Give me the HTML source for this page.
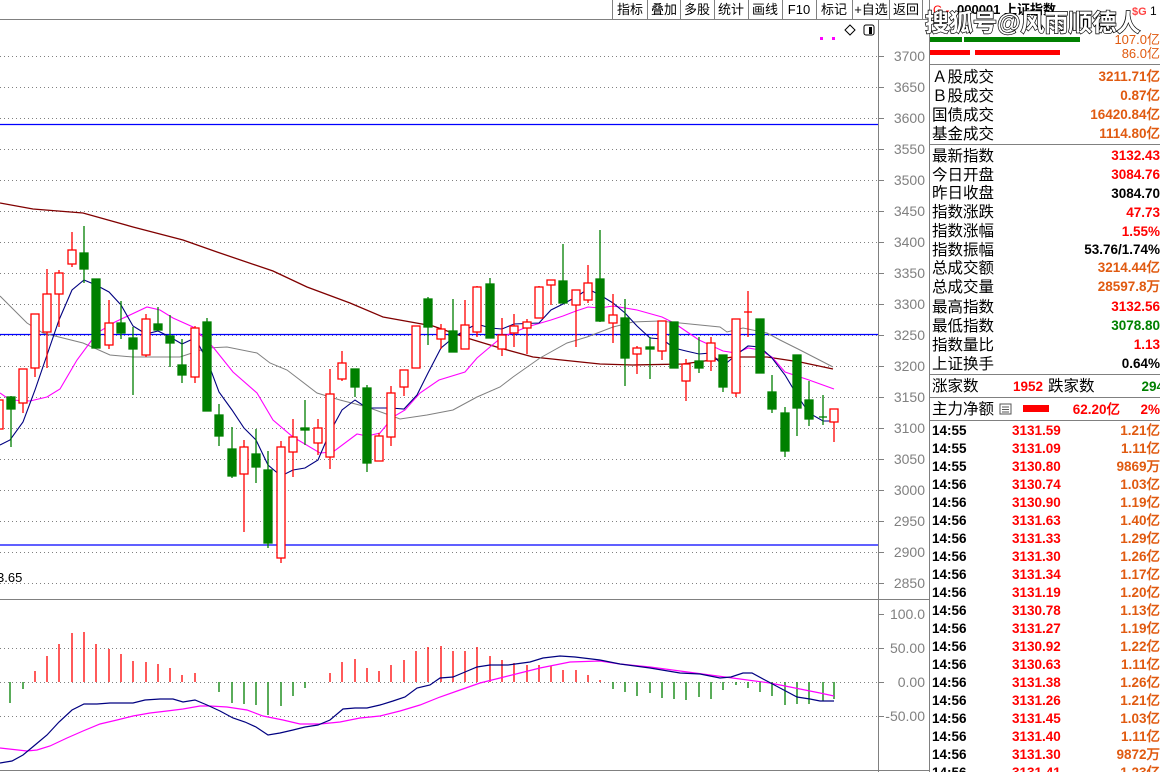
<!DOCTYPE html>
<html><head><meta charset="utf-8">
<style>
html,body{margin:0;padding:0;background:#fff;width:1160px;height:772px;overflow:hidden;font-family:"Liberation Sans","Noto Sans CJK SC",sans-serif;}
svg{display:block}
.ax{font:14px "Liberation Sans",sans-serif;fill:#808080;text-anchor:end}
.cj{font:15.5px "Liberation Sans","Noto Sans CJK SC",sans-serif;fill:#000}
.nb{font:bold 13.5px "Liberation Sans",sans-serif;text-anchor:end}
.tb{font:13px "Liberation Sans","Noto Sans CJK SC",sans-serif;fill:#000;text-anchor:middle}
</style></head><body>
<svg width="1160" height="772" viewBox="0 0 1160 772" xmlns="http://www.w3.org/2000/svg">
<!-- toolbar -->
<line x1="0" y1="19.5" x2="929" y2="19.5" stroke="#808080"/>
<g stroke="#808080">
<line x1="612.5" y1="0" x2="612.5" y2="19"/><line x1="647.5" y1="0" x2="647.5" y2="19"/><line x1="680.5" y1="0" x2="680.5" y2="19"/><line x1="714.5" y1="0" x2="714.5" y2="19"/><line x1="748.5" y1="0" x2="748.5" y2="19"/><line x1="782.5" y1="0" x2="782.5" y2="19"/><line x1="816.5" y1="0" x2="816.5" y2="19"/><line x1="852.5" y1="0" x2="852.5" y2="19"/><line x1="889.5" y1="0" x2="889.5" y2="19"/><line x1="922.5" y1="0" x2="922.5" y2="19"/>
</g>
<g class="tb"><text x="630" y="14">指标</text><text x="664" y="14">叠加</text><text x="697" y="14">多股</text><text x="731" y="14">统计</text><text x="765" y="14">画线</text><text x="799" y="14">F10</text><text x="834" y="14">标记</text><text x="871" y="14">+自选</text><text x="906" y="14">返回</text></g>

<!-- axes -->
<line x1="878.5" y1="19" x2="878.5" y2="772" stroke="#808080"/>
<line x1="929.5" y1="0" x2="929.5" y2="772" stroke="#808080"/>
<line x1="0" y1="599.5" x2="929" y2="599.5" stroke="#808080"/>
<line x1="0" y1="770.5" x2="929" y2="770.5" stroke="#808080"/>

<!-- icons -->
<path d="M850 25 L855 30 L850 35 L845 30 Z" fill="none" stroke="#000"/>
<rect x="864" y="25" width="10" height="10" rx="2" fill="none" stroke="#000"/><rect x="869" y="27" width="3" height="7" fill="#000"/>
<rect x="820" y="37" width="3" height="3" fill="#f0f"/><rect x="832" y="37" width="3" height="3" fill="#f0f"/>

<!-- grid -->
<g stroke="#808080" stroke-dasharray="1 3">
<line x1="0" y1="56.5" x2="878" y2="56.5"/><line x1="0" y1="87.5" x2="878" y2="87.5"/><line x1="0" y1="118.5" x2="878" y2="118.5"/><line x1="0" y1="149.5" x2="878" y2="149.5"/><line x1="0" y1="180.5" x2="878" y2="180.5"/><line x1="0" y1="211.5" x2="878" y2="211.5"/><line x1="0" y1="242.5" x2="878" y2="242.5"/><line x1="0" y1="273.5" x2="878" y2="273.5"/><line x1="0" y1="304.5" x2="878" y2="304.5"/><line x1="0" y1="335.5" x2="878" y2="335.5"/><line x1="0" y1="366.5" x2="878" y2="366.5"/><line x1="0" y1="397.5" x2="878" y2="397.5"/><line x1="0" y1="428.5" x2="878" y2="428.5"/><line x1="0" y1="459.5" x2="878" y2="459.5"/><line x1="0" y1="490.5" x2="878" y2="490.5"/><line x1="0" y1="521.5" x2="878" y2="521.5"/><line x1="0" y1="552.5" x2="878" y2="552.5"/><line x1="0" y1="583.5" x2="878" y2="583.5"/>
<line x1="0" y1="648.5" x2="878" y2="648.5"/><line x1="0" y1="682.5" x2="878" y2="682.5"/><line x1="0" y1="716.5" x2="878" y2="716.5"/>
</g>
<g stroke="#808080">
<line x1="878" y1="56.5" x2="884" y2="56.5"/><line x1="878" y1="87.5" x2="884" y2="87.5"/><line x1="878" y1="118.5" x2="884" y2="118.5"/><line x1="878" y1="149.5" x2="884" y2="149.5"/><line x1="878" y1="180.5" x2="884" y2="180.5"/><line x1="878" y1="211.5" x2="884" y2="211.5"/><line x1="878" y1="242.5" x2="884" y2="242.5"/><line x1="878" y1="273.5" x2="884" y2="273.5"/><line x1="878" y1="304.5" x2="884" y2="304.5"/><line x1="878" y1="335.5" x2="884" y2="335.5"/><line x1="878" y1="366.5" x2="884" y2="366.5"/><line x1="878" y1="397.5" x2="884" y2="397.5"/><line x1="878" y1="428.5" x2="884" y2="428.5"/><line x1="878" y1="459.5" x2="884" y2="459.5"/><line x1="878" y1="490.5" x2="884" y2="490.5"/><line x1="878" y1="521.5" x2="884" y2="521.5"/><line x1="878" y1="552.5" x2="884" y2="552.5"/><line x1="878" y1="583.5" x2="884" y2="583.5"/>
<line x1="878" y1="614.5" x2="884" y2="614.5"/><line x1="878" y1="648.5" x2="884" y2="648.5"/><line x1="878" y1="682.5" x2="884" y2="682.5"/><line x1="878" y1="716.5" x2="884" y2="716.5"/>
</g>
<g class="ax">
<text x="925" y="61">3700</text><text x="925" y="92">3650</text><text x="925" y="123">3600</text><text x="925" y="154">3550</text><text x="925" y="185">3500</text><text x="925" y="216">3450</text><text x="925" y="247">3400</text><text x="925" y="278">3350</text><text x="925" y="309">3300</text><text x="925" y="340">3250</text><text x="925" y="371">3200</text><text x="925" y="402">3150</text><text x="925" y="433">3100</text><text x="925" y="464">3050</text><text x="925" y="495">3000</text><text x="925" y="526">2950</text><text x="925" y="557">2900</text><text x="925" y="588">2850</text>
<text x="925" y="619">100.0</text><text x="925" y="653">50.00</text><text x="925" y="687">0.00</text><text x="925" y="721">-50.00</text>
</g>
<text x="-3" y="582" style="font:13px 'Liberation Sans',sans-serif;fill:#000">3.65</text>

<!-- blue lines -->
<g stroke="#0000ff" stroke-width="1.3">
<line x1="0" y1="124.5" x2="878" y2="124.5"/><line x1="0" y1="334.5" x2="878" y2="334.5"/><line x1="0" y1="545" x2="878" y2="545"/>
</g>

<!-- MAs -->
<polyline fill="none" stroke="#800000" stroke-width="1.3" points="0,203 33,209 83,213 133,227 183,240 217,252 273,271 307,287 350,303 383,317 433,326 467,338 500,348 533,357 600,364 633,365 683,364 733,357 767,357 800,362 833,369"/>
<polyline fill="none" stroke="#808080" stroke-width="1" points="0,296 27,323 43,333 83,343 110,355 133,357 180,357 207,348 227,347 257,353 270,363 287,370 317,393 340,400 367,407 400,419 427,415 453,410 477,397 500,387 513,377 540,358 567,343 587,337 613,327 633,322 660,321 680,323 720,327 727,332 743,328 767,333 780,340 800,350 833,367"/>
<polyline fill="none" stroke="#ff00ff" stroke-width="1.1" points="0,393 10,400 30,401 47,397 60,389 77,360 97,333 115,322 147,307 160,310 173,318 193,327 213,347 233,372 257,393 273,420 293,437 320,453 333,452 357,434 367,436 380,433 393,417 405,410 420,393 439,380 465,372 477,358 490,347 502,337 527,327 551,320 563,316 576,311 588,307 600,308 613,306 637,310 662,317 674,323 699,340 723,351 736,353 748,348 760,350 772,357 785,372 809,380 834,389"/>
<polyline fill="none" stroke="#000080" stroke-width="1.1" points="0,445 10,440 23,422 35,390 47,355 59,320 72,290 84,280 96,285 109,292 121,305 133,326 146,334 158,331 170,337 182,344 195,338 207,360 219,392 232,410 244,428 256,440 268,465 281,476 293,470 305,468 318,460 330,432 342,410 355,400 367,408 379,408 391,408 404,409 417,395 428,373 441,348 453,338 465,330 477,324 490,328 502,329 514,324 539,323 551,310 563,304 576,297 588,289 600,295 613,303 625,313 637,326 650,338 662,339 674,348 686,351 699,354 711,353 723,366 736,355 748,346 760,347 772,358 785,375 797,395 809,413 823,421 834,421"/>

<!-- candles -->
<g id="c">
<g stroke="#ff0000" fill="#fff" stroke-width="1.3">
<line x1="-1" y1="400" x2="-1" y2="429"/><rect x="-5" y="400" width="8" height="29"/>
<line x1="23" y1="369" x2="23" y2="413"/><rect x="19" y="369" width="8" height="34"/>
<line x1="35" y1="314" x2="35" y2="377"/><rect x="31" y="314" width="8" height="54"/>
<line x1="47" y1="269" x2="47" y2="368"/><rect x="43" y="294" width="8" height="38"/>
<line x1="59" y1="270" x2="59" y2="327"/><rect x="55" y="273" width="8" height="21"/>
<line x1="72" y1="232" x2="72" y2="267"/><rect x="68" y="250" width="8" height="14"/>
<line x1="109" y1="300" x2="109" y2="349"/><rect x="105" y="323" width="8" height="22"/>
<line x1="146" y1="314" x2="146" y2="357"/><rect x="142" y="319" width="8" height="36"/>
<line x1="195" y1="326" x2="195" y2="383"/><rect x="191" y="328" width="8" height="49"/>
<line x1="244" y1="440" x2="244" y2="532"/><rect x="240" y="447" width="8" height="27"/>
<line x1="281" y1="441" x2="281" y2="563"/><rect x="277" y="447" width="8" height="111"/>
<line x1="293" y1="419" x2="293" y2="477"/><rect x="289" y="437" width="8" height="15"/>
<line x1="318" y1="419" x2="318" y2="455"/><rect x="314" y="428" width="8" height="15"/>
<line x1="330" y1="369" x2="330" y2="469"/><rect x="326" y="394" width="8" height="63"/>
<line x1="342" y1="351" x2="342" y2="381"/><rect x="338" y="363" width="8" height="16"/>
<line x1="379" y1="433" x2="379" y2="461"/><rect x="375" y="436" width="8" height="25"/>
<line x1="391" y1="386" x2="391" y2="446"/><rect x="387" y="393" width="8" height="44"/>
<line x1="404" y1="370" x2="404" y2="396"/><rect x="400" y="370" width="8" height="17"/>
<line x1="416" y1="326" x2="416" y2="368"/><rect x="412" y="326" width="8" height="42"/>
<line x1="441" y1="324" x2="441" y2="349"/><rect x="437" y="329" width="8" height="10"/>
<line x1="465" y1="300" x2="465" y2="349"/><rect x="461" y="325" width="8" height="24"/>
<line x1="477" y1="286" x2="477" y2="337"/><rect x="473" y="287" width="8" height="45"/>
<line x1="502" y1="318" x2="502" y2="356"/><rect x="498" y="335" width="8" height="14"/>
<line x1="514" y1="314" x2="514" y2="347"/><rect x="510" y="326" width="8" height="7"/>
<line x1="527" y1="319" x2="527" y2="354"/><rect x="523" y="322" width="8" height="6"/>
<line x1="539" y1="286" x2="539" y2="318"/><rect x="535" y="287" width="8" height="31"/>
<line x1="551" y1="280" x2="551" y2="305"/><rect x="547" y="280" width="8" height="5"/>
<line x1="576" y1="290" x2="576" y2="347"/><rect x="572" y="290" width="8" height="15"/>
<line x1="588" y1="265" x2="588" y2="303"/><rect x="584" y="283" width="8" height="17"/>
<line x1="613" y1="294" x2="613" y2="343"/><rect x="609" y="315" width="8" height="8"/>
<line x1="637" y1="346" x2="637" y2="374"/><rect x="633" y="348" width="8" height="6"/>
<line x1="662" y1="321" x2="662" y2="360"/><rect x="658" y="321" width="8" height="30"/>
<line x1="686" y1="359" x2="686" y2="401"/><rect x="682" y="364" width="8" height="17"/>
<line x1="711" y1="337" x2="711" y2="371"/><rect x="707" y="343" width="8" height="18"/>
<line x1="736" y1="319" x2="736" y2="397"/><rect x="732" y="319" width="8" height="74"/>
<line x1="748" y1="291" x2="748" y2="337"/><line x1="744" y1="312" x2="752" y2="312"/>
<line x1="834" y1="409" x2="834" y2="442"/><rect x="830" y="409" width="8" height="13"/>
</g>
<g stroke="#008000" fill="#008000" stroke-width="1.3">
<line x1="11" y1="396" x2="11" y2="447"/><rect x="7" y="397" width="8" height="12"/>
<line x1="84" y1="226" x2="84" y2="283"/><rect x="80" y="253" width="8" height="16"/>
<line x1="96" y1="279" x2="96" y2="348"/><rect x="92" y="279" width="8" height="69"/>
<line x1="121" y1="301" x2="121" y2="339"/><rect x="117" y="323" width="8" height="10"/>
<line x1="133" y1="327" x2="133" y2="395"/><rect x="129" y="338" width="8" height="11"/>
<line x1="158" y1="307" x2="158" y2="330"/><rect x="154" y="324" width="8" height="6"/>
<line x1="170" y1="315" x2="170" y2="367"/><rect x="166" y="336" width="8" height="7"/>
<line x1="182" y1="339" x2="182" y2="383"/><rect x="178" y="365" width="8" height="10"/>
<line x1="207" y1="318" x2="207" y2="411"/><rect x="203" y="322" width="8" height="89"/>
<line x1="219" y1="404" x2="219" y2="446"/><rect x="215" y="415" width="8" height="21"/>
<line x1="232" y1="427" x2="232" y2="478"/><rect x="228" y="449" width="8" height="27"/>
<line x1="256" y1="429" x2="256" y2="483"/><rect x="252" y="454" width="8" height="13"/>
<line x1="268" y1="451" x2="268" y2="548"/><rect x="264" y="470" width="8" height="73"/>
<line x1="305" y1="400" x2="305" y2="445"/><rect x="301" y="428" width="8" height="2"/>
<line x1="355" y1="369" x2="355" y2="397"/><rect x="351" y="369" width="8" height="18"/>
<line x1="367" y1="385" x2="367" y2="472"/><rect x="363" y="388" width="8" height="75"/>
<line x1="428" y1="297" x2="428" y2="345"/><rect x="424" y="299" width="8" height="28"/>
<line x1="453" y1="299" x2="453" y2="352"/><rect x="449" y="331" width="8" height="21"/>
<line x1="490" y1="278" x2="490" y2="338"/><rect x="486" y="284" width="8" height="54"/>
<line x1="563" y1="244" x2="563" y2="303"/><rect x="559" y="281" width="8" height="22"/>
<line x1="600" y1="230" x2="600" y2="322"/><rect x="596" y="279" width="8" height="42"/>
<line x1="625" y1="299" x2="625" y2="386"/><rect x="621" y="318" width="8" height="40"/>
<line x1="650" y1="337" x2="650" y2="379"/><rect x="646" y="347" width="8" height="2"/>
<line x1="674" y1="322" x2="674" y2="368"/><rect x="670" y="322" width="8" height="46"/>
<line x1="699" y1="337" x2="699" y2="373"/><rect x="695" y="361" width="8" height="7"/>
<line x1="723" y1="355" x2="723" y2="392"/><rect x="719" y="355" width="8" height="32"/>
<line x1="760" y1="319" x2="760" y2="373"/><rect x="756" y="319" width="8" height="54"/>
<line x1="772" y1="375" x2="772" y2="413"/><rect x="768" y="392" width="8" height="17"/>
<line x1="785" y1="407" x2="785" y2="457"/><rect x="781" y="413" width="8" height="38"/>
<line x1="797" y1="355" x2="797" y2="436"/><rect x="793" y="355" width="8" height="53"/>
<line x1="809" y1="381" x2="809" y2="426"/><rect x="805" y="400" width="8" height="19"/>
<line x1="823" y1="395" x2="823" y2="425"/><line x1="819" y1="417" x2="827" y2="417"/>
</g>
</g>

<!-- MACD bars -->
<g stroke="#ff0000" stroke-width="1.3">
<line x1="35" y1="682" x2="35" y2="671"/><line x1="47" y1="682" x2="47" y2="656"/><line x1="59" y1="682" x2="59" y2="644"/><line x1="72" y1="682" x2="72" y2="633"/><line x1="84" y1="682" x2="84" y2="632"/><line x1="96" y1="682" x2="96" y2="644"/><line x1="109" y1="682" x2="109" y2="649"/><line x1="121" y1="682" x2="121" y2="654"/><line x1="133" y1="682" x2="133" y2="661"/><line x1="146" y1="682" x2="146" y2="662"/><line x1="158" y1="682" x2="158" y2="664"/><line x1="170" y1="682" x2="170" y2="668"/><line x1="182" y1="682" x2="182" y2="675"/><line x1="195" y1="682" x2="195" y2="673"/>
<line x1="330" y1="682" x2="330" y2="673"/><line x1="342" y1="682" x2="342" y2="662"/><line x1="355" y1="682" x2="355" y2="659"/><line x1="367" y1="682" x2="367" y2="668"/><line x1="379" y1="682" x2="379" y2="671"/><line x1="391" y1="682" x2="391" y2="665"/><line x1="404" y1="682" x2="404" y2="660"/><line x1="416" y1="682" x2="416" y2="651"/><line x1="428" y1="682" x2="428" y2="647"/><line x1="441" y1="682" x2="441" y2="646"/><line x1="453" y1="682" x2="453" y2="651"/><line x1="465" y1="682" x2="465" y2="651"/><line x1="477" y1="682" x2="477" y2="647"/><line x1="490" y1="682" x2="490" y2="656"/><line x1="502" y1="682" x2="502" y2="660"/><line x1="514" y1="682" x2="514" y2="663"/><line x1="527" y1="682" x2="527" y2="665"/><line x1="539" y1="682" x2="539" y2="665"/><line x1="551" y1="682" x2="551" y2="666"/><line x1="563" y1="682" x2="563" y2="670"/><line x1="576" y1="682" x2="576" y2="670"/><line x1="588" y1="682" x2="588" y2="675"/><line x1="600" y1="682" x2="600" y2="680"/>
</g>
<g stroke="#008000" stroke-width="1.3">
<line x1="10" y1="682" x2="10" y2="703"/><line x1="23" y1="682" x2="23" y2="689"/><line x1="219" y1="682" x2="219" y2="692"/><line x1="232" y1="682" x2="232" y2="703"/><line x1="244" y1="682" x2="244" y2="704"/><line x1="256" y1="682" x2="256" y2="705"/><line x1="268" y1="682" x2="268" y2="715"/><line x1="281" y1="682" x2="281" y2="706"/><line x1="293" y1="682" x2="293" y2="696"/><line x1="305" y1="682" x2="305" y2="688"/>
<line x1="613" y1="682" x2="613" y2="689"/><line x1="625" y1="682" x2="625" y2="692"/><line x1="637" y1="682" x2="637" y2="696"/><line x1="650" y1="682" x2="650" y2="693"/><line x1="662" y1="682" x2="662" y2="698"/><line x1="674" y1="682" x2="674" y2="699"/><line x1="686" y1="682" x2="686" y2="700"/><line x1="699" y1="682" x2="699" y2="697"/><line x1="711" y1="682" x2="711" y2="699"/><line x1="723" y1="682" x2="723" y2="690"/><line x1="736" y1="682" x2="736" y2="685"/><line x1="748" y1="682" x2="748" y2="688"/><line x1="760" y1="682" x2="760" y2="692"/><line x1="772" y1="682" x2="772" y2="696"/><line x1="785" y1="682" x2="785" y2="705"/><line x1="797" y1="682" x2="797" y2="704"/><line x1="809" y1="682" x2="809" y2="704"/><line x1="823" y1="682" x2="823" y2="701"/><line x1="834" y1="682" x2="834" y2="699"/>
</g>
<polyline fill="none" stroke="#ff00ff" stroke-width="1.2" points="0,748 27,751 37,750 50,746 67,738 83,731 100,724 117,720 133,716 150,713 167,711 183,709 200,706 210,706 227,707 247,710 263,716 283,720 300,724 320,724 340,722 360,718 380,716 400,711 420,705 440,697 460,690 480,683 500,678 520,673 540,668 570,662 600,661 620,664 650,667 680,671 710,675 740,679 770,683 800,689 820,693 834,696"/>
<polyline fill="none" stroke="#000080" stroke-width="1.2" points="0,763 12,761 23,755 35,745 47,735 59,722 72,710 84,704 97,704 110,703 133,703 145,700 160,699 173,699 183,702 195,700 207,705 220,711 233,718 245,722 256,727 268,735 280,733 293,730 305,727 318,725 330,720 343,709 355,708 367,708 380,705 393,701 405,697 417,688 430,685 440,678 453,677 465,672 477,667 490,665 508,665 530,662 543,658 560,656 575,657 600,660 620,664 650,668 680,673 700,674 720,678 731,677 743,673 752,673 765,680 780,688 797,697 810,699 820,701 834,701"/>

<!-- right panel -->
<text x="933" y="14" style="font:12px 'Liberation Sans',sans-serif;fill:#f00">G -</text>
<text x="957" y="14" style="font:bold 13px 'Liberation Sans','Noto Sans CJK SC',sans-serif;fill:#000">000001 上证指数</text>
<text x="1132" y="15" style="font:bold 11px 'Liberation Sans',sans-serif;fill:#f44">$G</text><text x="1150" y="15" style="font:12px 'Liberation Sans',sans-serif;fill:#000">1</text>
<text x="925" y="31" style="font:bold 24px 'Liberation Sans','Noto Sans CJK SC',sans-serif;fill:#fff;stroke:#000;stroke-width:1.4;paint-order:stroke">搜狐号@风雨顺德人</text>
<rect x="930" y="37" width="32" height="5" fill="#008000"/><rect x="964" y="37" width="116" height="5" fill="#008000"/>
<rect x="930" y="50" width="40" height="5" fill="#f00"/><rect x="975" y="50" width="85" height="5" fill="#f00"/>
<g style="font:13px 'Liberation Sans','Noto Sans CJK SC',sans-serif;fill:#e05a10;text-anchor:end"><text x="1160" y="44">107.0亿</text><text x="1160" y="58">86.0亿</text></g>
<g stroke="#808080"><line x1="929" y1="64.5" x2="1160" y2="64.5"/><line x1="929" y1="144.5" x2="1160" y2="144.5"/><line x1="929" y1="374.5" x2="1160" y2="374.5"/><line x1="929" y1="397.5" x2="1160" y2="397.5"/><line x1="929" y1="420.5" x2="1160" y2="420.5"/></g>
<g class="cj">
<text x="932" y="82">Ａ股成交</text><text x="932" y="101">Ｂ股成交</text><text x="932" y="120">国债成交</text><text x="932" y="139">基金成交</text>
<text x="932" y="161">最新指数</text><text x="932" y="180">今日开盘</text><text x="932" y="198">昨日收盘</text><text x="932" y="217">指数涨跌</text><text x="932" y="236">指数涨幅</text><text x="932" y="255">指数振幅</text><text x="932" y="273">总成交额</text><text x="932" y="292">总成交量</text><text x="932" y="312">最高指数</text><text x="932" y="331">最低指数</text><text x="932" y="350">指数量比</text><text x="932" y="369">上证换手</text>
<text x="932" y="391">涨家数</text><text x="1048" y="391">跌家数</text><text x="932" y="414">主力净额</text>
</g>
<g class="nb" fill="#e05a10"><text x="1160" y="81">3211.71亿</text><text x="1160" y="100">0.87亿</text><text x="1160" y="119">16420.84亿</text><text x="1160" y="138">1114.80亿</text><text x="1160" y="272">3214.44亿</text><text x="1160" y="291">28597.8万</text></g>
<g class="nb" fill="#f00"><text x="1160" y="160">3132.43</text><text x="1160" y="179">3084.76</text><text x="1160" y="217">47.73</text><text x="1160" y="236">1.55%</text><text x="1160" y="311">3132.56</text><text x="1160" y="349">1.13</text><text x="1043" y="391">1952</text><text x="1120" y="414">62.20亿</text><text x="1160" y="414">2%</text></g>
<g class="nb" fill="#000"><text x="1160" y="198">3084.70</text><text x="1160" y="254">53.76/1.74%</text><text x="1160" y="368">0.64%</text></g>
<g class="nb" fill="#008000"><text x="1160" y="330">3078.80</text><text x="1164" y="391">294</text></g>
<rect x="1000" y="404" width="11" height="10" fill="none" stroke="#555"/><line x1="1002" y1="407" x2="1009" y2="407" stroke="#555"/><line x1="1002" y1="409.5" x2="1009" y2="409.5" stroke="#555"/><line x1="1002" y1="412" x2="1009" y2="412" stroke="#555"/>
<rect x="1023" y="405" width="26" height="7" fill="#f00"/>

<g style="font:bold 13.5px 'Liberation Sans',sans-serif">
<g fill="#000"><text x="932" y="435">14:55</text><text x="932" y="453">14:55</text><text x="932" y="471">14:55</text><text x="932" y="489">14:56</text><text x="932" y="507">14:56</text><text x="932" y="525">14:56</text><text x="932" y="543">14:56</text><text x="932" y="561">14:56</text><text x="932" y="579">14:56</text><text x="932" y="597">14:56</text><text x="932" y="615">14:56</text><text x="932" y="633">14:56</text><text x="932" y="651">14:56</text><text x="932" y="669">14:56</text><text x="932" y="687">14:56</text><text x="932" y="705">14:56</text><text x="932" y="723">14:56</text><text x="932" y="741">14:56</text><text x="932" y="759">14:56</text><text x="932" y="777">14:56</text></g>
<g fill="#f00"><text x="1012" y="435">3131.59</text><text x="1012" y="453">3131.09</text><text x="1012" y="471">3130.80</text><text x="1012" y="489">3130.74</text><text x="1012" y="507">3130.90</text><text x="1012" y="525">3131.63</text><text x="1012" y="543">3131.33</text><text x="1012" y="561">3131.30</text><text x="1012" y="579">3131.34</text><text x="1012" y="597">3131.19</text><text x="1012" y="615">3130.78</text><text x="1012" y="633">3131.27</text><text x="1012" y="651">3130.92</text><text x="1012" y="669">3130.63</text><text x="1012" y="687">3131.38</text><text x="1012" y="705">3131.26</text><text x="1012" y="723">3131.45</text><text x="1012" y="741">3131.40</text><text x="1012" y="759">3131.30</text><text x="1012" y="777">3131.41</text></g>
<g fill="#e05a10" text-anchor="end"><text x="1160" y="435">1.21亿</text><text x="1160" y="453">1.11亿</text><text x="1160" y="471">9869万</text><text x="1160" y="489">1.03亿</text><text x="1160" y="507">1.19亿</text><text x="1160" y="525">1.40亿</text><text x="1160" y="543">1.29亿</text><text x="1160" y="561">1.26亿</text><text x="1160" y="579">1.17亿</text><text x="1160" y="597">1.20亿</text><text x="1160" y="615">1.13亿</text><text x="1160" y="633">1.19亿</text><text x="1160" y="651">1.22亿</text><text x="1160" y="669">1.11亿</text><text x="1160" y="687">1.26亿</text><text x="1160" y="705">1.21亿</text><text x="1160" y="723">1.03亿</text><text x="1160" y="741">1.11亿</text><text x="1160" y="759">9872万</text><text x="1160" y="777">1.23亿</text></g>
</g>
</svg>
</body></html>
